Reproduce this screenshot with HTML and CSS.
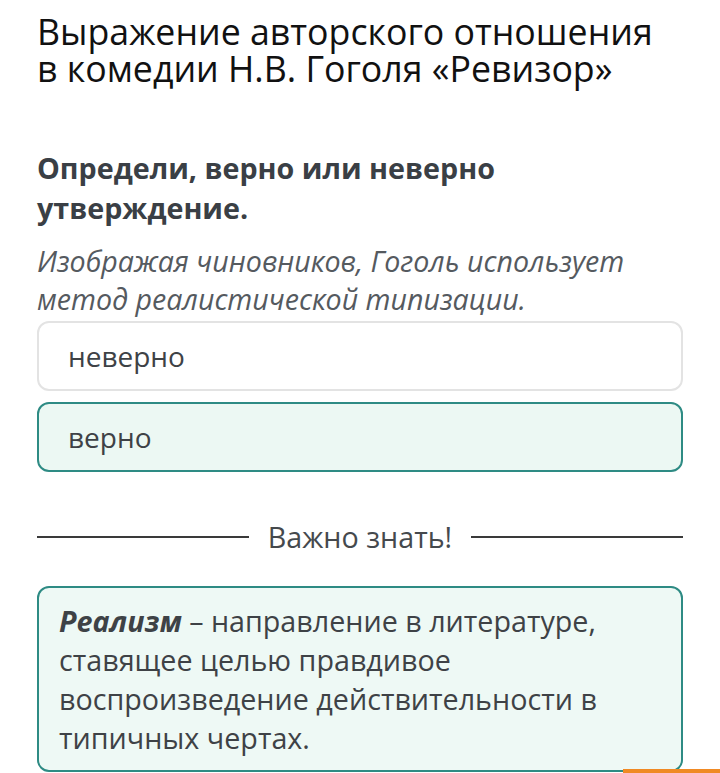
FILE: index.html
```html
<!DOCTYPE html>
<html lang="ru">
<head>
<meta charset="utf-8">
<link rel="stylesheet" href="styles.css">
</head>
<body>
<main class="page">
  <h1 class="title">Выражение авторского отношения<br>в комедии Н.В. Гоголя «Ревизор»</h1>
  <h2 class="question">Определи, верно или неверно<br>утверждение.</h2>
  <p class="statement">Изображая чиновников, Гоголь использует<br>метод реалистической типизации.</p>
  <div class="options">
    <div class="option">неверно</div>
    <div class="option option-selected">верно</div>
  </div>
  <div class="divider"><span class="divider-line"></span><span class="divider-text">Важно знать!</span><span class="divider-line"></span></div>
  <div class="info"><b class="term">Реализм</b> – направление в литературе,<br>ставящее целью правдивое<br>воспроизведение действительности в<br>типичных чертах.</div>
</main>
<div class="orange-bar"></div>
</body>
</html>
```
FILE: styles.css
```css
html, body {
  margin: 0;
  padding: 0;
  background: #ffffff;
  overflow: hidden;
}
body {
  width: 720px;
  height: 773px;
  position: relative;
  font-family: "Open Sans", "Noto Sans", sans-serif;
}
.page {
  padding: 13px 37px 0 37px;
  display: flex;
  flex-direction: column;
}
.title {
  margin: 0;
  font-size: 35.7px;
  font-weight: 400;
  line-height: 37px;
  color: #111;
  white-space: nowrap;
}
.question {
  margin: 61px 0 0 0;
  font-size: 28.7px;
  font-weight: 700;
  line-height: 40px;
  color: #3a3f45;
  white-space: nowrap;
}
.statement {
  margin: 14px 0 0 0;
  font-size: 28.6px;
  font-style: italic;
  line-height: 38px;
  color: #555a5f;
  white-space: nowrap;
}
.options {
  margin-top: 3px;
  display: flex;
  flex-direction: column;
  gap: 11px;
}
.option {
  box-sizing: border-box;
  height: 70px;
  border: 2px solid #e3e3e3;
  border-radius: 12px;
  padding: 0 29px;
  display: flex;
  align-items: center;
  font-size: 28px;
  color: #3e4246;
  background: #fff;
}
.option-selected {
  border-color: #2e8b84;
  background: #ecf8f3;
}
.divider {
  margin-top: 47px;
  display: flex;
  align-items: center;
  gap: 19px;
}
.divider-line {
  flex: 1;
  height: 2px;
  background: #3a3a3a;
}
.divider-text {
  font-size: 28.7px;
  line-height: 36px;
  color: #45494d;
}
.info {
  margin-top: 31px;
  box-sizing: border-box;
  height: 186px;
  border: 2px solid #2e8b84;
  border-radius: 12px;
  background: #eef9f5;
  padding: 13px 20px 0 20px;
  font-size: 28.7px;
  line-height: 39px;
  color: #3e4246;
  white-space: nowrap;
}
.term {
  font-style: italic;
  font-weight: 700;
}
.orange-bar {
  position: absolute;
  right: 0;
  bottom: 0;
  width: 97px;
  height: 4px;
  background: #f08a24;
}
```
